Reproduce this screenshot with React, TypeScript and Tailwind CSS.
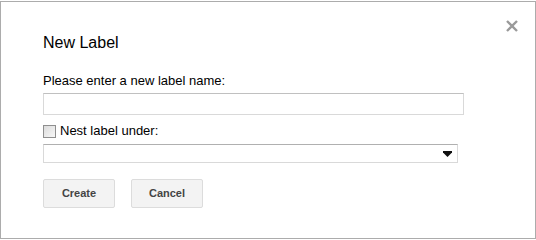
import { useState } from "react";

export default function App() {
  const [nest, setNest] = useState(false);

  return (
    <div className="w-[536px] h-[240px] bg-white pt-[1px] font-['Liberation_Sans',Arial,sans-serif] text-[#222]">
      <div className="relative w-[536px] h-[238px] border border-[#acacac] bg-white pl-[42px] pt-[31px]">
        <button className="absolute right-[15px] top-[16px] w-[16px] h-[16px] flex items-center justify-center text-[#999]">
          <svg width="12" height="12" viewBox="0 0 12 12">
            <path d="M1 1L11 11M11 1L1 11" stroke="#9a9a9a" strokeWidth="2.4" />
          </svg>
        </button>

        <div className="text-[16px] leading-[20px] text-black">New Label</div>

        <div className="mt-[20px] text-[13px] leading-[16px] text-black">Please enter a new label name:</div>
        <input
          className="mt-[4px] block w-[421px] h-[22px] border border-[#d9d9d9] border-t-[#c0c0c0] bg-white outline-none px-1 text-[13px]"
          type="text"
        />

        <label className="mt-[8px] flex items-center h-[16px] text-[13px] leading-[16px] text-black">
          <input
            type="checkbox"
            checked={nest}
            onChange={() => setNest(!nest)}
            className="appearance-none w-[13px] h-[13px] border border-[#8f8f8f] bg-gradient-to-br from-[#dcdcdc] to-[#f8f8f8] mr-[4px]"
          />
          Nest label under:
        </label>

        <div className="mt-[5px] relative w-[415px] h-[19px] border border-[#d9d9d9] border-t-[#b0b0b0] bg-white">
          <svg className="absolute right-[5px] top-[6px]" width="9" height="6" viewBox="0 0 9 6">
            <path d="M0 0H9V1.5L4.5 6L0 1.5Z" fill="#111" />
          </svg>
        </div>

        <div className="mt-[16px] flex gap-[16px]">
          <button className="w-[72px] h-[29px] rounded-[2px] border border-[#dcdcdc] bg-[#f3f3f3] text-[11px] font-bold text-[#444]">
            Create
          </button>
          <button className="w-[72px] h-[29px] rounded-[2px] border border-[#dcdcdc] bg-[#f3f3f3] text-[11px] font-bold text-[#444]">
            Cancel
          </button>
        </div>
      </div>
    </div>
  );
}
